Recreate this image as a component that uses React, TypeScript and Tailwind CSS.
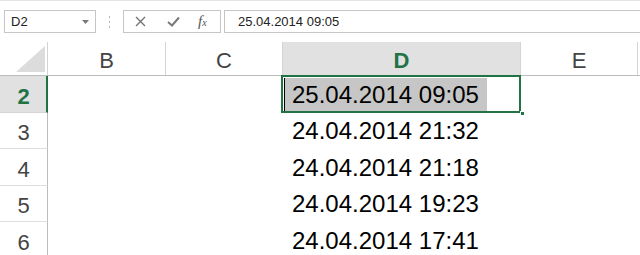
import React from 'react'

const rows = [
    { n: 2, value: '25.04.2014 09:05', active: true, h: 'h-[37px]' },
    { n: 3, value: '24.04.2014 21:32', active: false, h: 'h-[36px]' },
    { n: 4, value: '24.04.2014 21:18', active: false, h: 'h-[37px]' },
    { n: 5, value: '24.04.2014 19:23', active: false, h: 'h-[36px]' },
    { n: 6, value: '24.04.2014 17:41', active: false, h: 'h-[37px]' },
]

function FormulaBar() {
    return (
        <div className="flex h-[23px] items-stretch pl-[4px] text-[13px] text-[#222]">
            {/* Name box */}
            <div className="flex w-[92px] items-center justify-between border border-[#c6c6c6] pl-[6px] pr-[6px]">
                <span>D2</span>
                <svg width="7" height="4" viewBox="0 0 7 4">
                    <path d="M0 0 L7 0 L3.5 4 Z" fill="#7a7a7a" />
                </svg>
            </div>

            {/* grip dots */}
            <div className="flex w-[27px] items-center justify-center">
                <svg width="3" height="13" viewBox="0 0 3 13">
                    <rect x="1" y="1" width="1" height="2" fill="#b5b5b5" />
                    <rect x="1" y="6" width="1" height="2" fill="#b5b5b5" />
                    <rect x="1" y="11" width="1" height="2" fill="#b5b5b5" />
                </svg>
            </div>

            {/* cancel / enter / fx */}
            <div className="flex w-[98px] items-center border border-[#c6c6c6] pl-[11px]">
                <svg width="11" height="11" viewBox="0 0 11 11" className="mr-[21px]">
                    <path d="M1 1 L10 10 M10 1 L1 10" stroke="#737373" strokeWidth="1.4" />
                </svg>
                <svg width="13" height="11" viewBox="0 0 13 11" className="mr-[18px]">
                    <path d="M1 6 L5 9.5 L12 1.5" stroke="#7a7a7a" strokeWidth="2" fill="none" />
                </svg>
                <span className="font-['Liberation_Serif',serif] text-[15px] italic leading-none text-[#555]">
                    f<span className="text-[10px]">x</span>
                </span>
            </div>

            {/* formula input */}
            <div className="ml-[3px] flex flex-1 items-center border-y border-l border-[#c6c6c6] pl-[13px]">
                25.04.2014 09:05
            </div>
        </div>
    )
}

function HeaderRow() {
    const cols = [
        { l: 'B', w: 'w-[118px]' },
        { l: 'C', w: 'w-[117px]' },
        { l: 'D', w: 'w-[238px]', active: true },
        { l: 'E', w: 'w-[117px]' },
    ]
    return (
        <div className="flex h-[34px] border-b border-[#bcbcbc]">
            <div className="flex w-[48px] items-end justify-end border-r border-[#d4d4d4] pb-[3px] pr-[2px]">
                <svg width="29" height="26" viewBox="0 0 29 26">
                    <path d="M0 26 L29 26 L29 0 Z" fill="#dcdcdc" />
                </svg>
            </div>
            {cols.map((c) => (
                <div
                    key={c.l}
                    className={`${c.w} flex items-center justify-center border-r border-[#d4d4d4] pt-[4px] text-[22px] ${
                        c.active ? 'bg-[#e1e1e1] font-bold text-[#217346]' : 'bg-white text-[#444]'
                    }`}
                >
                    {c.l}
                </div>
            ))}
        </div>
    )
}

export default function App() {
    return (
        <div className="h-[255px] w-[640px] overflow-hidden bg-white font-['Liberation_Sans',Arial,sans-serif]">
            <div className="border-t border-[#e3e3e3] pt-[9px]">
                <FormulaBar />
            </div>

            <div className="mt-[9px]">
                <HeaderRow />

                {rows.map((r) => (
                    <div key={r.n} className={`flex ${r.h}`}>
                        <div
                            className={`flex w-[48px] items-center justify-center border-b pt-[4px] text-[22px] ${
                                r.active
                                    ? 'border-r-2 border-b-[#d4d4d4] border-r-[#217346] bg-[#e1e1e1] pl-[1px] font-bold text-[#217346]'
                                    : 'border-r border-b-[#dedede] border-r-[#bcbcbc] bg-white text-[#444]'
                            }`}
                        >
                            {r.n}
                        </div>
                        <div className="w-[235px]" />
                        <div className="relative flex w-[238px] items-end">
                            {r.active ? (
                                <>
                                    <span className="ml-[1px] flex h-[35px] items-end border-l-[1.5px] border-black bg-[#c6c6c6] pl-[7px] pr-[8px] text-[24px] leading-normal text-black">
                                        {r.value}
                                    </span>
                                    <div className="absolute -left-[2px] -top-[1px] h-[38px] w-[240px] border-2 border-[#217346]" />
                                    <div className="absolute -bottom-[3px] -right-[4px] h-[5px] w-[5px] border border-white bg-[#217346]" />
                                </>
                            ) : (
                                <span className="pl-[9px] text-[24px] leading-normal text-black">{r.value}</span>
                            )}
                        </div>
                    </div>
                ))}
            </div>
        </div>
    )
}
